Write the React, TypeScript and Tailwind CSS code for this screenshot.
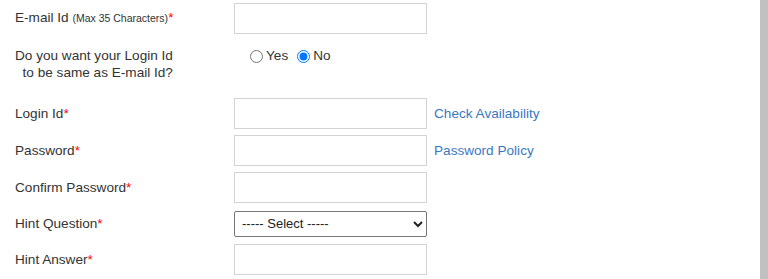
import React, { useState } from 'react';

const Req = () => <span className="text-[#ff0000]">*</span>;

const inputCls =
  'w-[193px] h-[31px] border border-[#d3d3d3] bg-white px-1 text-[14px] outline-none';

const App: React.FC = () => {
  const [same, setSame] = useState('no');

  return (
    <div
      className="flex w-[768px] h-[279px] overflow-hidden bg-white text-[13.6px] text-[#333333]"
      style={{ fontFamily: '"Liberation Sans", Arial, sans-serif' }}
    >
      <div className="flex-1 flex flex-col">
        <div className="flex items-center h-[37px]">
          <div className="w-[234px] pl-[15px]">
            E-mail Id <span className="text-[10.5px]">(Max 35 Characters)</span>
            <Req />
          </div>
          <input type="text" className={inputCls} />
        </div>

        <div className="flex items-start h-[58px] pt-[10px]">
          <div className="w-[234px] pl-[15px]">
            <div className="inline-block text-right leading-[17px]">
              Do you want your Login Id
              <br />
              to be same as E-mail Id?
            </div>
          </div>
          <div className="flex items-center pl-[16px] h-[17px] mt-[1px]">
            <label className="flex items-center">
              <input
                type="radio"
                name="same"
                checked={same === 'yes'}
                onChange={() => setSame('yes')}
                className="m-0 w-[13px] h-[13px] mr-[3px]"
              />
              Yes
            </label>
            <label className="flex items-center ml-[9px]">
              <input
                type="radio"
                name="same"
                checked={same === 'no'}
                onChange={() => setSame('no')}
                className="m-0 w-[13px] h-[13px] mr-[3px]"
              />
              No
            </label>
          </div>
        </div>

        <div className="flex items-center h-[37px]">
          <div className="w-[234px] pl-[15px] pt-[1px]">
            Login Id<Req />
          </div>
          <input type="text" className={inputCls} />
          <a href="#" className="ml-[7px] pt-[1px] text-[#3a77c2]">
            Check Availability
          </a>
        </div>

        <div className="flex items-center h-[37px]">
          <div className="w-[234px] pl-[15px] pt-[1px]">
            Password<Req />
          </div>
          <input type="password" className={inputCls} />
          <a href="#" className="ml-[7px] pt-[1px] text-[#3a77c2]">
            Password Policy
          </a>
        </div>

        <div className="flex items-center h-[37px]">
          <div className="w-[234px] pl-[15px] pt-[1px]">
            Confirm Password<Req />
          </div>
          <input type="password" className={inputCls} />
        </div>

        <div className="flex items-center h-[35px]">
          <div className="w-[234px] pl-[15px] pt-[1px]">
            Hint Question<Req />
          </div>
          <select className="w-[193px] h-[26px] border border-[#767676] rounded-[2px] bg-white text-[13px] text-[#222222] pl-[3px]">
            <option>----- Select -----</option>
          </select>
        </div>

        <div className="flex items-center h-[37px]">
          <div className="w-[234px] pl-[15px] pt-[1px]">
            Hint Answer<Req />
          </div>
          <input type="text" className={inputCls} />
        </div>
      </div>
      <div className="w-[8px] h-full bg-[#c1c1c1]" />
    </div>
  );
};

export default App;
